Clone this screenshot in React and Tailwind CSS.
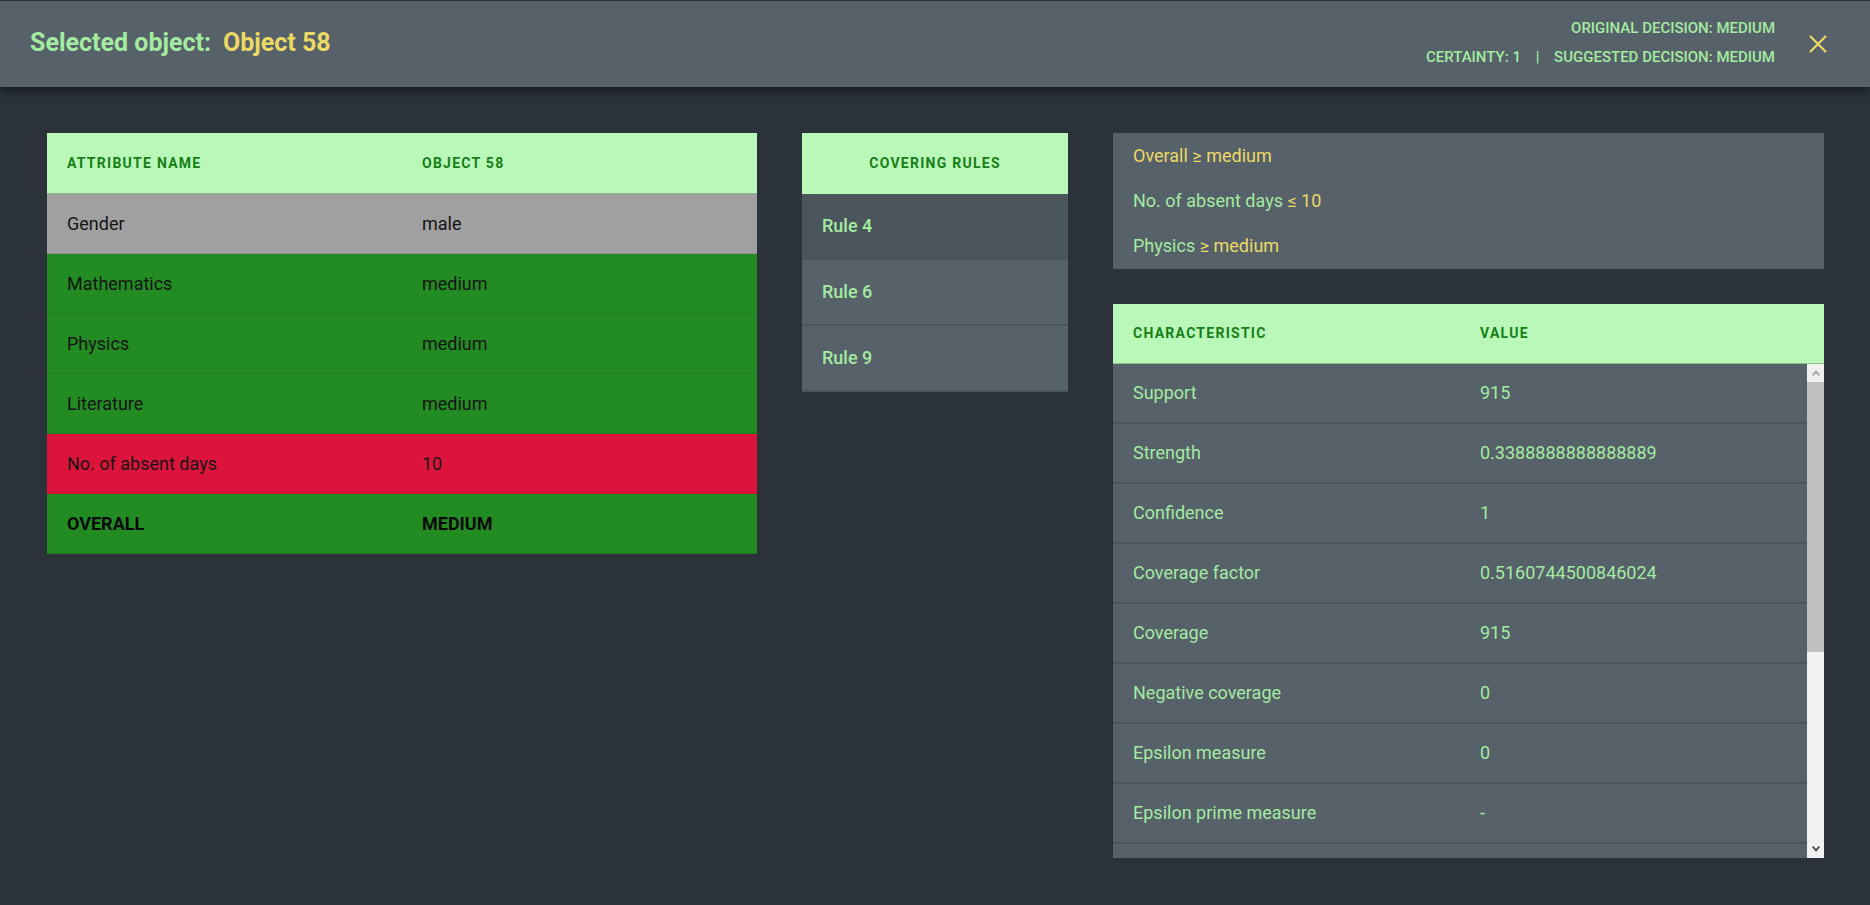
import React from "react";

const font = { fontFamily: "Roboto, 'Liberation Sans', sans-serif" };

const attributes = [
  { name: "Gender", value: "male", tone: "gray" },
  { name: "Mathematics", value: "medium", tone: "green" },
  { name: "Physics", value: "medium", tone: "green" },
  { name: "Literature", value: "medium", tone: "green" },
  { name: "No. of absent days", value: "10", tone: "red" },
];

const rules = ["Rule 4", "Rule 6", "Rule 9"];

const characteristics = [
  ["Support", "915"],
  ["Strength", "0.3388888888888889"],
  ["Confidence", "1"],
  ["Coverage factor", "0.5160744500846024"],
  ["Coverage", "915"],
  ["Negative coverage", "0"],
  ["Epsilon measure", "0"],
  ["Epsilon prime measure", "-"],
  ["f-confirmation measure", "1"],
  ["A-confirmation measure", "0.4839255499153976"],
];

const toneClass = {
  gray: "bg-[#a0a0a0]",
  green: "bg-[#228b22]",
  red: "bg-[#dc143c]",
};

const thClass = "text-[14px] font-bold tracking-[0.09em] text-[#167f16] uppercase";

// fake classic scrollbar, the page screenshot hides native ones
const Scrollbar = () => (
  <div className="w-[17px] shrink-0 flex flex-col bg-[#f1f1f1]">
    <div className="h-[18px] flex items-center justify-center">
      <svg width="8" height="6" viewBox="0 0 8 6" fill="#a3a3a3">
        <path d="M4 0 L8 5 L6.5 6 L4 3 L1.5 6 L0 5 Z" />
      </svg>
    </div>
    <div className="h-[270px] bg-[#c1c1c1]" />
    <div className="flex-1" />
    <div className="h-[18px] flex items-center justify-center">
      <svg width="8" height="6" viewBox="0 0 8 6" fill="#505050">
        <path d="M4 6 L8 1 L6.5 0 L4 3 L1.5 0 L0 1 Z" />
      </svg>
    </div>
  </div>
);

export default function App() {
  return (
    <div className="min-h-screen bg-[#2b323a] text-[18px]" style={font}>
      {/* header */}
      <div className="h-[87px] border-t border-[#2b323a] bg-[#566169] shadow-[0_4px_10px_rgba(0,0,0,0.45)] flex items-center justify-between pl-[30px] pr-[42px] relative">
        <div className="text-[25px] font-bold flex items-center gap-[12px] -mt-[2px]">
          <span className="text-[#a3eba0]">Selected object:</span>
          <span className="text-[#ecd964]">Object 58</span>
        </div>
        <div className="flex items-center gap-[33px]">
          <div className="text-[15px] font-medium text-[#a3eba0] text-right leading-[29px] -mt-[2px]">
            <div>ORIGINAL DECISION: MEDIUM</div>
            <div>
              CERTAINTY: 1 <span className="mx-[11px]">|</span> SUGGESTED DECISION: MEDIUM
            </div>
          </div>
          <button className="text-[#ecd964]">
            <svg width="20" height="20" viewBox="0 0 20 20" fill="none" stroke="currentColor" strokeWidth="2.2">
              <path d="M2 2 L18 18 M18 2 L2 18" />
            </svg>
          </button>
        </div>
      </div>

      {/* content */}
      <div className="flex items-start gap-[45px] pl-[47px] pr-[46px] pt-[46px]">
        {/* attributes table */}
        <div className="w-[710px] shrink-0">
          <div className={`h-[61px] grid grid-cols-2 items-center bg-[#b9f8b9] border-b border-[#8fbf8f] ${thClass}`}>
            <div className="pl-[20px]">Attribute name</div>
            <div className="pl-[20px]">Object 58</div>
          </div>
          {attributes.map((row) => (
            <div
              key={row.name}
              className={`h-[60px] grid grid-cols-2 items-center border-b border-black/10 text-[#151515] pb-[1px] ${toneClass[row.tone]}`}
            >
              <div className="pl-[20px]">{row.name}</div>
              <div className="pl-[20px]">{row.value}</div>
            </div>
          ))}
          <div className="h-[60px] grid grid-cols-2 items-center border-b border-black/10 bg-[#228b22] text-[#0a0a0a] font-bold pb-[1px]">
            <div className="pl-[20px]">OVERALL</div>
            <div className="pl-[20px]">MEDIUM</div>
          </div>
        </div>

        {/* covering rules */}
        <div className="w-[266px] shrink-0">
          <div className={`h-[61px] flex items-center justify-center bg-[#b9f8b9] ${thClass}`}>
            Covering rules
          </div>
          {rules.map((rule, i) => (
            <div
              key={rule}
              className={`h-[66px] flex items-center pl-[20px] pb-[2px] border-b-2 border-[#4a545c] font-medium text-[#a3eba0] ${
                i === 0 ? "bg-[#4b555c]" : "bg-[#56616a]"
              }`}
            >
              {rule}
            </div>
          ))}
        </div>

        {/* rule details */}
        <div className="flex-1 min-w-0">
          <div className="h-[136px] bg-[#56616a] flex flex-col justify-center gap-[20px] pl-[20px] leading-[25px] pb-[2px]">
            <div className="text-[#ecd964]">Overall ≥ medium</div>
            <div className="text-[#a3eba0]">
              No. of absent days <span className="text-[#ecd964]">≤ 10</span>
            </div>
            <div className="text-[#a3eba0]">
              Physics <span className="text-[#ecd964]">≥ medium</span>
            </div>
          </div>

          <div className="mt-[35px]">
            <div className={`h-[60px] grid grid-cols-2 items-center bg-[#b9f8b9] border-b border-[#8fbf8f] pr-[17px] ${thClass}`}>
              <div className="pl-[20px]">Characteristic</div>
              <div className="pl-[20px]">Value</div>
            </div>
            <div className="h-[494px] flex bg-[#56616a]">
              <div className="flex-1 min-w-0 overflow-hidden">
                {characteristics.map(([name, value]) => (
                  <div
                    key={name}
                    className="h-[60px] grid grid-cols-2 items-center pb-[2px] border-b-2 border-[#4a545c] text-[#a3eba0]"
                  >
                    <div className="pl-[20px]">{name}</div>
                    <div className="pl-[20px]">{value}</div>
                  </div>
                ))}
              </div>
              <Scrollbar />
            </div>
          </div>
        </div>
      </div>
    </div>
  );
}
